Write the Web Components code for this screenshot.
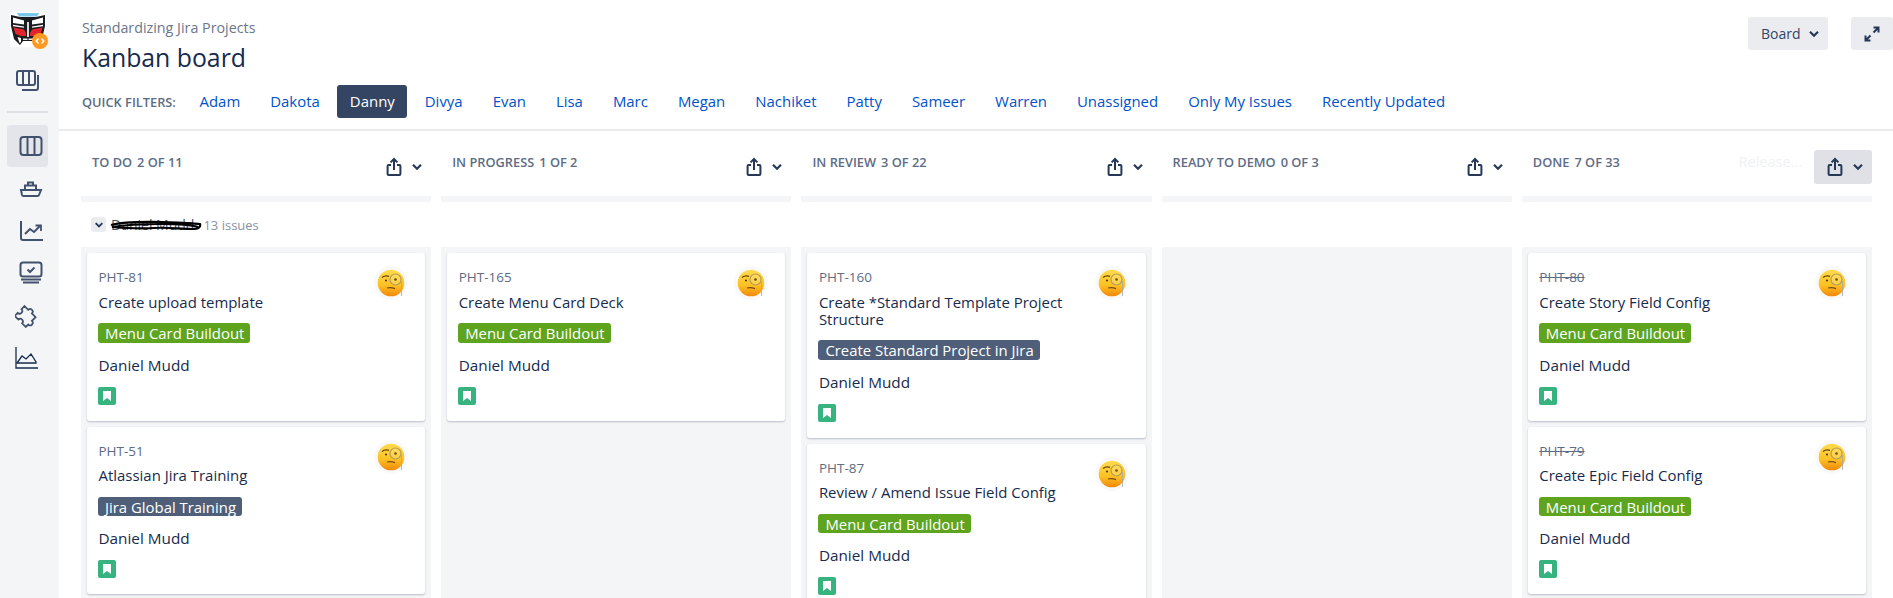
<!doctype html>
<html>
<head>
<meta charset="utf-8">
<title>Kanban board</title>
<style>
html,body{margin:0;height:598px;overflow:hidden;background:#fff}
body{font:15px/20px "Open Sans",sans-serif;color:#172b4d}
</style>
</head>
<body>
<jira-app>
  <jira-sidebar slot="side"></jira-sidebar>
  <board-header slot="head">
    <span slot="crumb">Standardizing Jira Projects</span>
    <span slot="title">Kanban board</span>
    <quick-filter>Adam</quick-filter>
    <quick-filter>Dakota</quick-filter>
    <quick-filter active>Danny</quick-filter>
    <quick-filter>Divya</quick-filter>
    <quick-filter>Evan</quick-filter>
    <quick-filter>Lisa</quick-filter>
    <quick-filter>Marc</quick-filter>
    <quick-filter>Megan</quick-filter>
    <quick-filter>Nachiket</quick-filter>
    <quick-filter>Patty</quick-filter>
    <quick-filter>Sameer</quick-filter>
    <quick-filter>Warren</quick-filter>
    <quick-filter>Unassigned</quick-filter>
    <quick-filter>Only My Issues</quick-filter>
    <quick-filter>Recently Updated</quick-filter>
  </board-header>
  <column-head name="TO DO" count="2 OF 11"></column-head>
  <column-head name="IN PROGRESS" count="1 OF 2"></column-head>
  <column-head name="IN REVIEW" count="3 OF 22"></column-head>
  <column-head name="READY TO DEMO" count="0 OF 3"></column-head>
  <column-head name="DONE" count="7 OF 33" release></column-head>
  <swim-lane slot="lane" count="13 issues">Daniel Mudd</swim-lane>
  <board-column slot="cols">
    <issue-card key="PHT-81" label="Menu Card Buildout">Create upload template</issue-card>
    <issue-card key="PHT-51" label="Jira Global Training" dark>Atlassian Jira Training</issue-card>
  </board-column>
  <board-column slot="cols">
    <issue-card key="PHT-165" label="Menu Card Buildout">Create Menu Card Deck</issue-card>
  </board-column>
  <board-column slot="cols">
    <issue-card key="PHT-160" label="Create Standard Project in Jira" dark>Create *Standard Template Project Structure</issue-card>
    <issue-card key="PHT-87" label="Menu Card Buildout">Review / Amend Issue Field Config</issue-card>
  </board-column>
  <board-column slot="cols"></board-column>
  <board-column slot="cols">
    <issue-card key="PHT-80" done label="Menu Card Buildout">Create Story Field Config</issue-card>
    <issue-card key="PHT-79" done label="Menu Card Buildout">Create Epic Field Config</issue-card>
  </board-column>
</jira-app>

<script>
// small helper, every element is just markup + styles in an open shadow root
const define = (name, render) => customElements.define(name, class extends HTMLElement {
    constructor() {
        super().attachShadow({ mode: "open" });
    }
    connectedCallback() {
        this.shadowRoot.innerHTML = render(this);
    }
});

const CHEVRON = `<svg width="12" height="12" viewBox="0 0 12 12" fill="none" stroke="#253858" stroke-width="2.2"><path d="M2 3.8l4 4 4-4"/></svg>`;
const SHARE = `<svg width="16" height="20" viewBox="0 0 16 20" fill="none" stroke="#253858" stroke-width="2"><path d="M5 8H2.6a1 1 0 0 0-1 1v8a1 1 0 0 0 1 1h10.8a1 1 0 0 0 1-1V9a1 1 0 0 0-1-1H11"/><path d="M8 13V2.5M4.6 5.4L8 2l3.4 3.4"/></svg>`;

const SIDE_ICONS = {
    backlog: `<rect x="1" y="2" width="18" height="14" rx="2"/><path d="M7 2v14M13 2v14M22 6v13a2 2 0 0 1-2 2H6"/>`,
    board: `<rect x="1.5" y="3" width="21" height="18" rx="3"/><path d="M8.5 3v18M15.500 3v18"/>`,
    ship: `<path d="M2 13h20l-2 5a1.500 1.500 0 0 1-1.400 1H4.400A1.500 1.500 0 0 1 3 18z"/><path d="M6 13V8.500h11V13M9 8.500V5.500h5v3"/>`,
    chart: `<path d="M2 2v17a2 2 0 0 0 2 2h20"/><path d="M6 15l5-5 4 3 6-6"/><path d="M16.500 6.500H22V12" stroke-width="1.800"/>`,
    testing: `<rect x="1.500" y="1.500" width="21" height="14" rx="2.500"/><path d="M8.500 8.500l2.500 2.500 4.500-4.500M2 18.500h20M4 21.500h16"/>`,
    puzzle: `<path transform="rotate(45 12 12) translate(1.500 1.500) scale(.87)" d="M2 6h6a3 3 0 0 1 6 0h6v6a3 3 0 0 1 0 6v4h-6a3 3 0 0 0-6 0H2v-5a3 3 0 0 0 0-6z"/>`,
    area: `<path d="M1 1v21h22" stroke="#172b4d" stroke-width="1.300"/><path d="M2 17l5-7 4 3 5-5 5 8v1H2z" stroke="#172b4d" stroke-width="1.300"/>`
};

define("side-icon", el => `
<style>
:host{display:flex;align-items:center;height:42.400px;width:41px;margin-left:7px;border-radius:4px;box-sizing:border-box;padding-left:${el.getAttribute("dx") || 12}px}
:host([active]){background:#e3e5ea}
svg{display:block;fill:none;stroke:#42526e;stroke-width:2}
</style>
<svg width="24" height="24" viewBox="0 0 24 24">${SIDE_ICONS[el.getAttribute("name")]}</svg>`);

define("jira-sidebar", () => `
<style>
:host{display:flex;flex-direction:column;width:59px;height:598px;background:#f4f5f7;box-sizing:border-box;padding-top:12px}
.logo{position:relative;width:36px;height:35px;margin-left:10px}
.badge{position:absolute;left:22px;top:21px;width:16px;height:16px}
.divider{height:2px;width:41px;margin:9px 0 12px 7px;background:#dfe1e6}
.back{height:42px;margin-top:13px}
</style>
<div class="logo">
  <svg width="36" height="35" viewBox="0 0 36 35">
    <rect width="36" height="35" rx="3" fill="#fff"/>
    <path d="M7 1H29L27 4.500H9z" fill="#7cc8ea"/>
    <path d="M1 3L10 5H26L35 3V14L32 27L26 33L23 29H13L10 33L4 27L1 14z" fill="#1b1c20"/>
    <path d="M3 5.500L14 8.500V12.500L3 11zM33 5.500L22 8.500V12.500L33 11z" fill="#fff"/>
    <path d="M3 12.800L14 14.500V15.800L3 14.300zM33 12.800L22 14.500V15.800L33 14.300z" fill="#fff"/>
    <path d="M3.500 15.500L14 17.500L16 21V24H11L5.500 22zM32.500 15.500L22 17.500L20 21V24H25L30.500 22z" fill="#e3242d"/>
    <path d="M7.500 25L11 26V30L9.500 31zM28.500 25L25 26V30L26.500 31z" fill="#fff"/>
    <path d="M13 26.500H17.500V28H13zM18.500 26.500H23V28H18.500z" fill="#e9eaec"/>
    <path d="M17 10h2v15h-2z" fill="#d8d9dc"/>
  </svg>
  <svg class="badge" viewBox="0 0 16 16"><circle cx="8" cy="8" r="8" fill="#ff991f"/><path d="M6.500 5.500L4.200 8l2.300 2.500M9.500 5.500L11.800 8l-2.300 2.500" fill="none" stroke="#fff" stroke-width="1.500"/></svg>
</div>
<div class="back"><side-icon name="backlog" dx="9"></side-icon></div>
<div class="divider"></div>
<side-icon name="board" active></side-icon>
<side-icon name="ship"></side-icon>
<side-icon name="chart"></side-icon>
<side-icon name="testing"></side-icon>
<side-icon name="puzzle" dx="8"></side-icon>
<side-icon name="area" dx="8"></side-icon>`);

define("quick-filter", () => `
<style>
:host{display:block;height:33px;line-height:33px;padding:0 12.500px;border-radius:3px;color:#0052cc;font-size:14.950px;white-space:nowrap}
:host([active]){background:#344563;color:#fff}
</style>
<slot></slot>`);

define("board-header", () => `
<style>
:host{display:block;height:129px;border-bottom:2px solid #ebecf0;box-sizing:content-box;padding-left:23px;position:relative}
.top{display:flex;justify-content:space-between;height:85px}
.crumb{font-size:14.300px;line-height:20px;color:#6b778c;padding-top:18px}
.title{font-size:24.800px;line-height:30px;color:#172b4d;padding-top:4px}
.actions{display:flex;gap:23px;padding-top:17px}
.btn{display:flex;align-items:center;height:33px;border-radius:3px;background:#ebecf0;box-sizing:border-box;font-size:14px;color:#344563}
.board{width:80px;padding-left:13px;gap:7px}
.expand{width:42px;justify-content:center}
.filters{display:flex;align-items:center;height:33px}
.qf{font-size:12.800px;font-weight:600;color:#5e6c84;width:105px;white-space:nowrap}
.list{display:flex;gap:5px}
</style>
<div class="top">
  <div>
    <div class="crumb"><slot name="crumb"></slot></div>
    <div class="title"><slot name="title"></slot></div>
  </div>
  <div class="actions">
    <div class="btn board">Board ${CHEVRON}</div>
    <div class="btn expand"><svg width="16" height="16" viewBox="0 0 16 16" fill="none" stroke="#253858" stroke-width="2"><path d="M9.500 6.500L14 2M9.500 1.500H14.500V6.500M6.500 9.500L2 14M1.500 9.500V14.500H6.500"/></svg></div>
  </div>
</div>
<div class="filters">
  <div class="qf">QUICK FILTERS:</div>
  <div class="list"><slot></slot></div>
</div>`);

define("column-head", el => `
<style>
:host{display:block;height:71px;box-sizing:border-box;padding-top:19px;position:relative}
.row{display:flex;align-items:flex-start;height:34px;padding-left:11px;font-size:12.800px;font-weight:600;line-height:20px;color:#5e6c84;white-space:nowrap}
.name{padding-top:2px}
.count{margin-left:5px;padding-top:2px}
.release{margin-left:auto;margin-right:12px;padding-top:2px;font-size:14.500px;font-weight:400;color:#f0f1f4}
.share{display:flex;align-items:center;width:58px;height:34px;border-radius:3px;box-sizing:border-box;padding-left:13px;gap:9px;margin-left:auto}
.release + .share{margin-left:0;background:#dfe1e6}
.strip{height:6px;margin-top:12px;background:#f4f5f7}
</style>
<div class="row">
  <span class="name">${el.getAttribute("name")}</span><span class="count">${el.getAttribute("count")}</span>
  ${el.hasAttribute("release") ? `<span class="release">Release...</span>` : ""}
  <div class="share">${SHARE}${CHEVRON}</div>
</div>
<div class="strip"></div>`);

define("swim-lane", el => `
<style>
:host{display:flex;align-items:center;height:45px;padding-left:10px;box-sizing:border-box}
.toggle{display:flex;align-items:center;justify-content:center;width:15px;height:15px;border-radius:3px;background:#ebecf0;margin-right:5px}
.toggle svg{width:10px;height:10px}
.name{position:relative;font-size:14px;color:#42526e}
.name svg{position:absolute;left:-1px;top:3px}
.count{margin-left:9px;font-size:13px;color:#8993a4}
</style>
<div class="toggle">${CHEVRON}</div>
<span class="name"><slot></slot>
  <svg width="92" height="14" viewBox="0 0 92 14" fill="none" stroke="#000" stroke-width="2.200">
    <path d="M1 7C16 3 34 4 52 4s26 1 38 2c1 3-2 5-6 5 -14 0-28-2-40-1S14 10 2 9c12-2 36-3 50-3s26 0 36 3"/>
  </svg>
</span>
<span class="count">${el.getAttribute("count")}</span>`);

define("monocle-face", () => `
<style>
:host{display:block;width:34px;height:34px}
svg{display:block}
</style>
<svg width="34" height="34" viewBox="0 0 34 34">
  <defs><linearGradient id="f" x1="0" y1="0" x2="0" y2="1"><stop offset="0" stop-color="#ffdc4e"/><stop offset=".6" stop-color="#fcc022"/><stop offset="1" stop-color="#f2870c"/></linearGradient></defs>
  <circle cx="17" cy="17" r="17" fill="#f9f9fa"/>
  <circle cx="17" cy="17" r="13.300" fill="url(#f)"/>
  <path d="M8 11.500q3-2.500 7-1.200" fill="none" stroke="#6b4310" stroke-width="1.400"/>
  <circle cx="12" cy="14.500" r="1.100" fill="#5b3a14"/>
  <circle cx="21.500" cy="13.500" r="5.500" fill="#ffe88a" fill-opacity=".35" stroke="#b59c5a" stroke-width="1.200"/>
  <circle cx="21.500" cy="13.500" r="1.300" fill="#6b4a1c"/>
  <path d="M13 22q4-1 8 .6" fill="none" stroke="#7a4a16" stroke-width="1.200"/>
  <path d="M27.500 15v15" stroke="#a8a8a8" stroke-width=".8"/>
</svg>`);

define("issue-card", el => `
<style>
:host{display:block;position:relative;background:#fff;border-radius:3px;box-shadow:0 1px 2px rgba(9,30,66,.25);padding:14px 17px 16px 11px;box-sizing:border-box;flex:none}
.top{display:flex;justify-content:space-between;height:20px}
.key{font-size:13.500px;line-height:20px;color:#5e6c84;font-weight:500;padding-left:.500px}
:host([done]) .key{text-decoration:line-through}
monocle-face{margin-top:-1px}
.summary{font-size:14.950px;line-height:17px;margin:6.500px 60px 12.500px .500px;color:#172b4d}
.label{display:inline-block;height:19.500px;line-height:20px;padding:0 6px 0 7px;border-radius:3px;background:#5ea41f;color:#fff;font-size:14.900px;vertical-align:top;white-space:nowrap}
:host([dark]) .label{background:#505f79}
.labels{height:19.500px}
.who{font-size:15.300px;line-height:20px;margin:12px 0 12px .500px;color:#172b4d}
.type{display:block}
</style>
<div class="top"><span class="key">${el.getAttribute("key")}</span><monocle-face></monocle-face></div>
<div class="summary"><slot></slot></div>
<div class="labels"><span class="label">${el.getAttribute("label")}</span></div>
<div class="who">Daniel Mudd</div>
<svg class="type" width="18" height="18" viewBox="0 0 18 18"><rect width="18" height="18" rx="2" fill="#36b37e"/><path d="M5 4h8v10l-4-3-4 3z" fill="#fff"/></svg>`);

define("board-column", () => `
<style>
:host{display:flex;flex-direction:column;gap:6px;padding:6px;background:#f4f5f7;height:400px;box-sizing:border-box}
</style>
<slot></slot>`);

define("jira-app", () => `
<style>
:host{display:flex;height:598px;overflow:hidden}
main{flex:1;min-width:0}
.board{padding:0 21px 0 22px}
.grid{display:grid;grid-template-columns:repeat(5,1fr);column-gap:10px}
</style>
<slot name="side"></slot>
<main>
  <slot name="head"></slot>
  <div class="board">
    <div class="grid"><slot></slot></div>
    <slot name="lane"></slot>
    <div class="grid"><slot name="cols"></slot></div>
  </div>
</main>`);
</script>
</body>
</html>
